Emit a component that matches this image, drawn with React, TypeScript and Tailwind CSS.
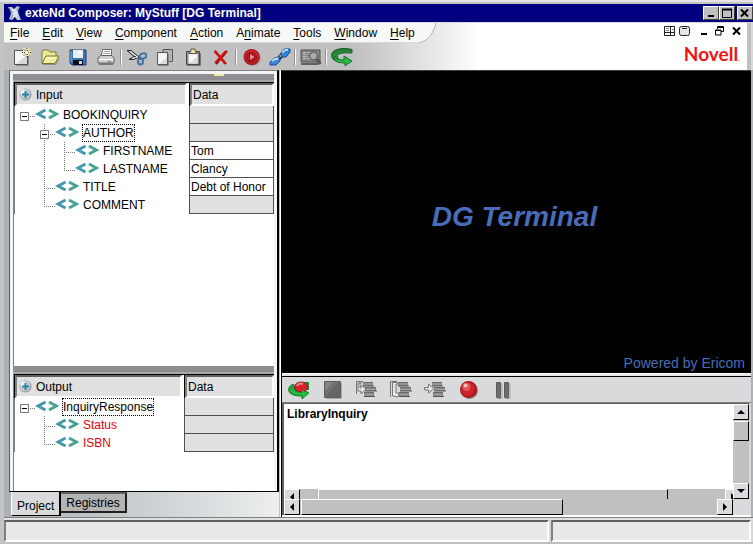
import React from 'react';

type Guide = 'blank' | 'line' | 'tee' | 'corner' | 'root' | 'branch';

interface TreeRow {
  name: string;
  guides: Guide[];
  value?: string;
  selected?: boolean;
  required?: boolean;
}

const inputRows: TreeRow[] = [
  { name: 'BOOKINQUIRY', guides: ['root'] },
  { name: 'AUTHOR', guides: ['blank', 'branch'], selected: true },
  { name: 'FIRSTNAME', guides: ['blank', 'line', 'tee'], value: 'Tom' },
  { name: 'LASTNAME', guides: ['blank', 'line', 'corner'], value: 'Clancy' },
  { name: 'TITLE', guides: ['blank', 'tee'], value: 'Debt of Honor' },
  { name: 'COMMENT', guides: ['blank', 'corner'] },
];

const outputRows: TreeRow[] = [
  { name: 'InquiryResponse', guides: ['root'], selected: true },
  { name: 'Status', guides: ['blank', 'tee'], required: true },
  { name: 'ISBN', guides: ['blank', 'corner'], required: true },
];

const menus: [string, string, string][] = [
  ['', 'F', 'ile'],
  ['', 'E', 'dit'],
  ['', 'V', 'iew'],
  ['', 'C', 'omponent'],
  ['', 'A', 'ction'],
  ['A', 'n', 'imate'],
  ['', 'T', 'ools'],
  ['', 'W', 'indow'],
  ['', 'H', 'elp'],
];

const Svg: React.FC<{ w: number; h: number; children: React.ReactNode }> = ({ w, h, children }) => (
  <svg width={w} height={h} viewBox={`0 0 ${w} ${h}`} fill="none" aria-hidden="true" className="shrink-0">
    {children}
  </svg>
);

const NewIcon = () => (
  <Svg w={18} h={18}>
    <path d="M3 17.500h12.500V8" stroke="#8c8c8c" />
    <path d="M1.500 2.500h13v14h-13z" fill="#f6f6f6" stroke="#555" />
    <path d="M3 16L14 7v9z" fill="#d8d8d8" />
    <path d="M10 0h8v8h-8z" fill="#e8e6b8" />
    <path d="M14 0v9M9 4.500h9M10.500 1l7 7M17.500 1l-7 7" stroke="#333" strokeDasharray="1 1" />
    <path d="M12.500 3h3v3h-3z" fill="#fffad0" />
  </Svg>
);

const OpenIcon = () => (
  <Svg w={20} h={18}>
    <path d="M2 15V4l1-2h5l2 2h6v4" fill="#efe99a" stroke="#7d7a28" />
    <path d="M2 15.500L6 8h13l-4 7.500z" fill="#f2ec9c" stroke="#77742a" />
    <path d="M5 14l2-4h9" stroke="#fffde0" />
    <path d="M3 16.500h13l3-6" stroke="#8c8c8c" />
  </Svg>
);

const SaveIcon = () => (
  <Svg w={18} h={18}>
    <path d="M1 2h16v15H3l-2-2z" fill="#3f74b5" stroke="#1f3f73" />
    <path d="M4 2h10v8H4z" fill="#e6edf3" />
    <path d="M10 3h3v3h-3z" fill="#fff" />
    <path d="M4 12h10v5H4z" fill="#0c0c14" />
    <path d="M10 13h3v3h-3z" fill="#c9d6e4" />
    <path d="M2 3v11" stroke="#7faadb" />
  </Svg>
);

const PrintIcon = () => (
  <Svg w={18} h={18}>
    <path d="M4 9L5.500 1.500h9V9" fill="#fff" stroke="#666" />
    <path d="M7 3.500h6M6 5.500h7" stroke="#aaa" />
    <path d="M1 10l3-2.500h11l2 2.500v5H1z" fill="#d0d0d0" stroke="#666" />
    <path d="M2 11.500h14" stroke="#fff" />
    <path d="M2 16h14" stroke="#777" strokeWidth="2" />
    <path d="M11 13.500h3" stroke="#4b88b8" />
  </Svg>
);

const CutIcon = () => (
  <Svg w={20} h={18}>
    <path d="M0 2.500h4l8 6.500M2 11.500h4l7-2.500M0 2.500L9 10M2 11.500l5-3 6 0" stroke="#222" />
    <path d="M3 3.500l8 6M5 10.500l6-2" stroke="#eee" />
    <ellipse cx="16" cy="8" rx="3.500" ry="2.500" transform="rotate(-20 16 8)" stroke="#456f9f" strokeWidth="2" />
    <ellipse cx="13.500" cy="13.500" rx="2.500" ry="3" stroke="#456f9f" strokeWidth="2" />
  </Svg>
);

const CopyIcon = () => (
  <Svg w={18} h={18}>
    <path d="M7 1.500h9.500v12H7z" fill="#b4b4b4" stroke="#555" />
    <path d="M1.500 4.500h10v12h-10z" fill="#f5f5f5" stroke="#555" />
    <path d="M3 16l8-7v7z" fill="#dcdcdc" />
    <path d="M2 17.500h10.500V6" stroke="#888" />
  </Svg>
);

const PasteIcon = () => (
  <Svg w={16} h={18}>
    <path d="M1.500 3.500h13v13h-13z" fill="#8c8c8c" stroke="#444" />
    <path d="M3.500 6h9v9.500h-9z" fill="#f5f5f5" />
    <path d="M4 15.500l8.500-7v7z" fill="#dcdcdc" />
    <path d="M4 5.500L6 3V1h4v2l2 2.500z" fill="#efe88c" stroke="#555" />
    <path d="M2 17.500h13.500V5" stroke="#777" />
  </Svg>
);

const DeleteIcon = () => (
  <Svg w={16} h={18}>
    <path d="M2 3l11 13M14 3L3 16" stroke="#7a1010" strokeWidth="2" />
    <path d="M1.500 3L12 15.500M13 3L2 15" stroke="#e01010" strokeWidth="2" />
  </Svg>
);

const RunIcon = () => (
  <Svg w={18} h={18}>
    <circle cx="9.500" cy="9.500" r="8" fill="#8a7a7a" />
    <circle cx="8.500" cy="9" r="8" fill="#b01a22" />
    <circle cx="8.500" cy="8.500" r="6.500" fill="#d8262e" />
    <circle cx="8.500" cy="9" r="5" fill="#c01c24" stroke="#8c1218" />
    <path d="M6.500 5v8l6-4z" fill="#ee8a8c" stroke="#7c1018" />
  </Svg>
);

const LinkIcon = () => (
  <Svg w={22} h={18}>
    <path d="M8 12l6-6" stroke="#111" strokeWidth="4" />
    <path d="M8.500 10.500l5-4" stroke="#fff" strokeWidth="2" strokeDasharray="2 1" />
    <path d="M12 5l3-4h6v3l-4 5h-5z" fill="#2f86d8" stroke="#12508f" />
    <path d="M13 4.500l3-2.500h3" stroke="#a8d6ff" strokeWidth="2" />
    <path d="M1 14l4-4h6v3l-4 4H1z" fill="#3c86de" stroke="#1c4e9c" />
    <path d="M3 13l3-2h3" stroke="#b4dcff" strokeWidth="2" />
  </Svg>
);

const InspectIcon = () => (
  <Svg w={22} h={18}>
    <path d="M1 2h19v12H1z" fill="#858585" stroke="#4e4e4e" />
    <path d="M3 4.500h7M3 6.500h5M3 8.500h5M3 10.500h7" stroke="#c2c2c2" strokeDasharray="3 1" />
    <path d="M1 16h17" stroke="#5e5e5e" strokeWidth="2" />
    <circle cx="13.500" cy="8" r="4" fill="#a9a9a9" stroke="#555" />
    <path d="M16.500 11l4 5" stroke="#555" strokeWidth="3" />
  </Svg>
);

const ReturnIcon = () => (
  <Svg w={22} h={18}>
    <path d="M21 1.500C12-1 1 1 .5 7c0 4 3 6 7 7v-3.500c-1-1-1-2-1-3C7 5 14 4.500 21 5z" fill="#2b8a3b" stroke="#17602a" />
    <path d="M3 8c2 3 5 4 10 4V8l8 5-7 5v-3C8 15 3 14 3 8z" fill="#2bb848" stroke="#17702a" />
    <path d="M2 5c3-3 10-4 18-2" stroke="#1a5c28" strokeDasharray="1 1" />
  </Svg>
);

const ReplayIcon = () => (
  <Svg w={22} h={18}>
    <path d="M15 1h6v8h-4z" fill="#1f8a35" />
    <path d="M5 3C-1 6-1 12 6 14c3 1 6 1 8 1v3l7-6-7-4v3c-5 0-8-1-7-4z" fill="#1fa83c" stroke="#167a2c" />
    <ellipse cx="13" cy="6" rx="6.500" ry="5" fill="#cf252b" stroke="#8e1a1e" />
    <path d="M9 5c1-2 3-3 6-2" stroke="#f08080" strokeWidth="2" />
    <path d="M3 9c2 3 7 4 12 4v-2l4 2-4 3" stroke="#24c044" strokeWidth="2" />
  </Svg>
);

const StopIcon = () => (
  <Svg w={18} h={18}>
    <path d="M2 17.500h15.500V2" stroke="#aaa" />
    <path d="M.5.5h16v16H.5z" fill="#707070" stroke="#5c5c5c" />
    <path d="M1 16L16 1v15z" fill="#646464" />
    <path d="M1 1h9l-9 9z" fill="#848484" />
  </Svg>
);

const Bars: React.FC<{ x: number }> = ({ x }) => (
  <g transform={`translate(${x} 0)`}>
    <path d="M0 1h10v4H0zM2 6h11v4H2zM1 11h10v4H1z" fill="#8a8a8a" />
    <path d="M0 1.500h10M2 6.500h11M1 11.500h10" stroke="#6c6c6c" />
    <path d="M0 5h11M2 10h12M1 15.500h11" stroke="#555" />
    <path d="M1 3h8M3 8.500h9M2 13.500h8" stroke="#a0a0a0" />
  </g>
);

const StepIntoIcon = () => (
  <Svg w={22} h={18}>
    <Bars x={7} />
    <path d="M7 .5H.5V13" stroke="#777" />
    <path d="M6 2H2v8h3v3l5-5-5-4v3H4V2" fill="#e6e6e6" stroke="#777" />
  </Svg>
);

const StepOverIcon = () => (
  <Svg w={22} h={18}>
    <Bars x={8} />
    <path d="M7 .5H.5V16" stroke="#777" />
    <path d="M7 1.500H2.500V15L8 16l1-4H6V3h2z" fill="#e6e6e6" stroke="#777" />
  </Svg>
);

const StepOutIcon = () => (
  <Svg w={22} h={18}>
    <Bars x={8} />
    <path d="M.5 6.500h4V3l5.500 4.500-5.500 4.500V9h-4z" fill="#e6e6e6" stroke="#777" />
  </Svg>
);

const RecordIcon = () => (
  <Svg w={20} h={18}>
    <circle cx="10.500" cy="9.500" r="8.500" fill="#8a8080" />
    <circle cx="9.500" cy="8.500" r="8.500" fill="#a8161c" />
    <circle cx="9" cy="8" r="7" fill="#cc2229" />
    <circle cx="7.500" cy="6" r="4" fill="#e2555a" />
    <circle cx="6.500" cy="4.500" r="2" fill="#f6b8b8" />
  </Svg>
);

const PauseIcon = () => (
  <Svg w={16} h={18}>
    <path d="M2 17.500h5V2M10 17.500h5V2" stroke="#a6a6a6" />
    <path d="M1.500 1.500h4v15h-4zM9.500 1.500h4v15h-4z" fill="#6e6e6e" stroke="#5c5c5c" />
  </Svg>
);

const mainTools: ([string, React.FC] | null)[] = [
  ['New', NewIcon],
  ['Open', OpenIcon],
  ['Save', SaveIcon],
  ['Print', PrintIcon],
  null,
  ['Cut', CutIcon],
  ['Copy', CopyIcon],
  ['Paste', PasteIcon],
  ['Delete', DeleteIcon],
  null,
  ['Run', RunIcon],
  ['Connect', LinkIcon],
  null,
  ['Inspect', InspectIcon],
  null,
  ['Return', ReturnIcon],
];

const animateTools: [string, React.FC][] = [
  ['Start animation', ReplayIcon],
  ['Stop', StopIcon],
  ['Step into', StepIntoIcon],
  ['Step over', StepOverIcon],
  ['Step out', StepOutIcon],
  ['Record', RecordIcon],
  ['Pause', PauseIcon],
];

const GuideSlot: React.FC<{ kind: Guide }> = ({ kind }) => {
  const box = kind === 'root' || kind === 'branch';
  return (
    <Svg w={20} h={18}>
      <g stroke="#777" strokeDasharray="1 1">
        {(kind === 'line' || kind === 'tee' || kind === 'branch') && <path d="M9.500 0v18" />}
        {kind === 'corner' && <path d="M9.500 0v10" />}
        {kind !== 'blank' && kind !== 'line' && <path d="M9 10.500h12" />}
      </g>
      {box && (
        <>
          <path d="M5.500 6.500h8v8h-8z" fill="#fff" stroke="#777" />
          <path d="M7 10.500h5" stroke="#000" />
        </>
      )}
    </Svg>
  );
};

const TagIcon = () => (
  <Svg w={24} h={18}>
    <path d="M10.500 4L3 8l7.500 4" stroke="#4597ae" strokeWidth="3" />
    <path d="M14 4l7.500 4-7.500 4" stroke="#48a294" strokeWidth="3" />
  </Svg>
);

const PlusBall = () => (
  <Svg w={13} h={13}>
    <circle cx="6.500" cy="6.500" r="6" fill="#8f969a" />
    <circle cx="6" cy="6" r="5.500" fill="#c3cace" />
    <circle cx="4.500" cy="4.500" r="3" fill="#eef1f3" />
    <path d="M6.500 3v7M3 6.500h7" stroke="#2f7fa6" strokeWidth="2" />
  </Svg>
);

const bevelIn = 'border-2 border-t-[#606060] border-l-[#808080] border-r-white border-b-white';
const bevelOut = 'border border-t-white border-l-white border-r-black border-b-black';

const TreeTable: React.FC<{ title: string; rows: TreeRow[]; dataWidth: string }> = ({ title, rows, dataWidth }) => (
  <table className="w-full table-fixed border-separate border-spacing-0 text-left">
    <thead>
      <tr>
        <th className="h-6 border-t border-l border-black bg-white p-0 font-normal">
          <div className={`mr-0.5 flex h-[23px] items-center gap-1 bg-[#e0e0e0] pl-0.5 ${bevelIn}`}>
            <PlusBall />
            {title}
          </div>
        </th>
        <th className={`h-6 border-t border-l border-black p-0 font-normal ${dataWidth}`}>
          <div className={`flex h-[23px] items-center bg-[#e0e0e0] pl-px ${bevelIn}`}>Data</div>
        </th>
      </tr>
    </thead>
    <tbody>
      {rows.map((row) => (
        <tr key={row.name}>
          <td className="h-[18px] border-l border-[#808080] p-0">
            <div className="flex h-[18px] items-center">
              {row.guides.map((kind, i) => (
                <GuideSlot key={i} kind={kind} />
              ))}
              <TagIcon />
              <span
                className={`ml-[3px] border border-dotted leading-4 ${row.selected ? 'border-black' : 'border-transparent'} ${row.required ? 'text-[#f00000]' : ''}`}
              >
                {row.name}
              </span>
            </div>
          </td>
          <td
            className={`h-[18px] border-b border-l border-r border-[#505050] p-0 pl-px leading-4 whitespace-nowrap ${row.value ? 'bg-white' : 'bg-[#e0e0e0]'}`}
          >
            {row.value}
          </td>
        </tr>
      ))}
    </tbody>
  </table>
);

const Splitter: React.FC<{ marked?: boolean }> = ({ marked }) => (
  <div className="h-2 shrink-0 border-b-2 border-[#a8a8a8] bg-[#8e8e92]">
    <div className={`ml-auto h-0.5 w-2.5 ${marked ? 'mr-[50px] bg-[#efe6a0]' : ''}`} />
  </div>
);

const Arrow: React.FC<{ dir: 'up' | 'down' | 'left' | 'right' }> = ({ dir }) => {
  const paths = { up: 'M0 6h8L4 2z', down: 'M0 2h8L4 6z', left: 'M6 0v8L2 4z', right: 'M2 0v8l4-4z' };
  return (
    <Svg w={8} h={8}>
      <path d={paths[dir]} fill="#000" />
    </Svg>
  );
};

const ScrollButton: React.FC<{ dir: 'up' | 'down' | 'left' | 'right' }> = ({ dir }) => (
  <button aria-label={`Scroll ${dir}`} className={`flex h-4 w-4 shrink-0 items-center justify-center bg-[#d8dadc] ${bevelOut}`}>
    <Arrow dir={dir} />
  </button>
);

const WindowButton: React.FC<{ label: string; children: React.ReactNode }> = ({ label, children }) => (
  <button
    aria-label={label}
    className="flex h-3.5 w-4 items-center justify-center border border-t-white border-l-white border-r-[#404040] border-b-[#404040] bg-[#c0c0c0]"
  >
    {children}
  </button>
);

const TitleBar = () => (
  <div className="flex h-[18px] shrink-0 items-center bg-[#000080] pl-1 font-bold text-white">
    <Svg w={13} h={16}>
      <path d="M0 2h4l2 2 3-3 3 1-2 4 1 4 2 5H9l-2-3-3 3-3-1 2-5-1-4z" fill="#b7c9d4" />
      <path d="M3 4h7l-1 3 1 5H4l1-5z" fill="#d9e4ea" />
      <path d="M1 3l3 5M11 2L9 6M3 13l2-3" stroke="#5d7f93" />
    </Svg>
    <h1 className="ml-1 flex-1 leading-4">exteNd Composer: MyStuff [DG Terminal]</h1>
    <WindowButton label="Minimize">
      <Svg w={10} h={10}>
        <path d="M2 8h6" stroke="#000" strokeWidth="2" />
      </Svg>
    </WindowButton>
    <WindowButton label="Maximize">
      <Svg w={10} h={10}>
        <path d="M.5 1.500h9v8h-9z" stroke="#000" />
        <path d="M0 1.500h10" stroke="#000" strokeWidth="2" />
      </Svg>
    </WindowButton>
    <div className="ml-0.5 flex">
      <WindowButton label="Close">
        <Svg w={10} h={10}>
          <path d="M1 1.500l7 7M8 1.500l-7 7" stroke="#000" strokeWidth="2" />
        </Svg>
      </WindowButton>
    </div>
  </div>
);

const Header = () => (
  <header className="mt-px mr-[2px] flex h-[47px] shrink-0 border-r-4 border-[#c0c0c0] bg-linear-to-r from-[#c0c0c0] from-[350px] to-white to-[475px]">
    <div className="flex flex-1 flex-col">
      <div className="flex h-5">
        <nav className="flex items-center gap-[13px] border-b border-[#d8d8d8] bg-[#f6f9f8] pr-1 pl-1.5">
          {menus.map(([before, key, after]) => (
            <button key={key + after} className="leading-4">
              {before}
              <span className="underline underline-offset-2">{key}</span>
              {after}
            </button>
          ))}
        </nav>
        <Svg w={18} h={20}>
          <path d="M0 0h17C14 10 10 18 0 19.500z" fill="#f6f9f8" />
          <path d="M17 0C14 10 10 18 0 19.500" stroke="#b4b4b4" />
        </Svg>
      </div>
      <div className="flex flex-1 items-center pl-1" role="toolbar" aria-label="Main">
        {mainTools.map((tool, i) => {
          if (!tool) return <div key={i} className="mr-px h-4 w-0.5 border-l border-[#909090] bg-white" />;
          const [label, Icon] = tool;
          return (
            <button key={i} aria-label={label} className="flex h-6 w-7 items-center justify-center">
              <Icon />
            </button>
          );
        })}
      </div>
    </div>
    <div className="flex flex-col items-end pr-1.5">
      <div className="mt-0.5 flex h-4 items-center">
        <button aria-label="Tile windows">
          <Svg w={12} h={11}>
            <path d="M.5.5h10v9H.5zM6.500 0v10M0 6.500h11" fill="#fff" stroke="#222" />
            <path d="M2 2.500h3M2 4.500h3M8 3.500h2" stroke="#888" />
          </Svg>
        </button>
        <button aria-label="Show window" className="ml-[3px]">
          <Svg w={12} h={11}>
            <rect x=".5" y=".5" width="10" height="9" rx="2" fill="#e6e6ea" stroke="#222" />
            <path d="M3 2.500h5" stroke="#222" />
          </Svg>
        </button>
        <button aria-label="Minimize document" className="ml-2.5">
          <Svg w={6} h={10}>
            <path d="M0 8h6" stroke="#000" strokeWidth="2" />
          </Svg>
        </button>
        <button aria-label="Restore document" className="ml-2">
          <Svg w={9} h={10}>
            <path d="M2.500 3V.5h6v5H6M2 1.500h7" stroke="#000" />
            <path d="M.5 4h5.500v5H.5zM0 4.500h6" stroke="#000" />
          </Svg>
        </button>
        <button aria-label="Close document" className="ml-2">
          <Svg w={9} h={10}>
            <path d="M1 1.500l7 7M8 1.500l-7 7" stroke="#000" strokeWidth="2" />
          </Svg>
        </button>
      </div>
      <div className="mt-[5px] pr-px text-[19px] leading-6 font-bold text-[#f01414] [font-family:Lato,sans-serif]">
        Novell<span className="text-[8px] font-normal">.</span>
      </div>
    </div>
  </header>
);

const ProjectPane = () => (
  <aside className="flex w-[275px] shrink-0 flex-col bg-linear-to-r from-[#a9b1b4] to-[#eceeef]">
    <div className="ml-[5px] flex min-h-0 flex-1 flex-col border-t border-r-2 border-b border-l border-t-[#808080] border-r-black border-b-black border-l-[#606060]">
      <div className="flex min-h-0 flex-1 flex-col border-3 border-b-0 border-[#f4f4f4]">
        <Splitter marked />
        <div className="min-h-0 flex-1 overflow-hidden border-l border-[#808080] bg-white">
          <TreeTable title="Input" rows={inputRows} dataWidth="w-[85px]" />
        </div>
        <Splitter />
        <div className="h-[117px] shrink-0 overflow-hidden border-l border-[#808080] bg-white">
          <TreeTable title="Output" rows={outputRows} dataWidth="w-[90px]" />
        </div>
      </div>
    </div>
    <div className="flex h-[25px] shrink-0 items-start pl-[7px]" role="tablist">
      <button
        role="tab"
        aria-selected="true"
        className="h-6 border-r-2 border-b border-l border-r-black border-b-black border-l-white bg-[#d8dadc] px-[5px] pt-1"
      >
        Project
      </button>
      <button
        role="tab"
        aria-selected="false"
        className="h-[21px] border-t-2 border-r-2 border-b-2 border-t-[#606060] border-r-[#202020] border-b-[#202020] bg-[#b4b4b4] px-[5px] leading-4"
      >
        Registries
      </button>
    </div>
  </aside>
);

const Terminal = () => (
  <section className="flex min-h-0 flex-1 flex-col border-t border-[#404040] bg-black text-[#4a6cb8]">
    <div className="flex flex-1 items-center justify-center pt-2.5 pr-1 text-[28px] font-bold italic">DG Terminal</div>
    <div className="pr-1.5 text-right text-[14px] leading-5">Powered by Ericom</div>
  </section>
);

const ActionPane = () => (
  <section className="shrink-0 bg-[#d8dadc]">
    <div className="flex h-[27px] items-center border-t border-b border-t-black border-b-[#808080]" role="toolbar" aria-label="Animate">
      {animateTools.map(([label, Icon]) => (
        <button key={label} aria-label={label} className="flex h-6 w-[34px] items-center justify-center">
          <Icon />
        </button>
      ))}
    </div>
    <div className="mr-0.5 border-t border-l-2 border-[#606060] bg-white">
      <div className="flex">
        <div className="flex min-w-0 flex-1 flex-col">
          <div className="h-[85px] bg-white pl-[3px] leading-5 font-bold">LibraryInquiry</div>
          <div className="flex h-2.5 items-start overflow-hidden bg-[#c0c0c0]">
            <ScrollButton dir="left" />
            <div className={`ml-[18px] h-4 w-[350px] bg-[#c0c0c0] ${bevelOut}`} />
            <div className="flex-1" />
            <div className="-mr-2">
              <ScrollButton dir="right" />
            </div>
          </div>
        </div>
        <div className="flex w-4 flex-col bg-[#c0c0c0]">
          <ScrollButton dir="up" />
          <div className={`mt-px h-5 bg-[#c0c0c0] ${bevelOut}`} />
          <div className="flex-1" />
          <ScrollButton dir="down" />
        </div>
      </div>
      <div className="flex h-4 bg-[#c0c0c0]">
        <ScrollButton dir="left" />
        <div className={`ml-px w-[262px] ${bevelOut}`} />
        <div className="flex-1" />
        <ScrollButton dir="right" />
        <div className="w-4 bg-[#d8dadc]" />
      </div>
    </div>
  </section>
);

export default function App() {
  return (
    <div className="flex h-screen flex-col border-t-2 border-[#e4e4e4] bg-[#d8d8d8] [font-family:'Liberation_Sans',Arial,sans-serif] text-xs text-black">
      <div className="flex min-h-0 flex-1 flex-col border-t-2 border-l-4 border-[#c4c4c4]">
        <TitleBar />
        <Header />
        <main className="flex min-h-0 flex-1 border-b border-[#808080]">
          <ProjectPane />
          <div className="flex w-[3px] shrink-0 border-r border-l border-r-black border-l-[#c0c0c0] bg-white" />
          <div className="flex min-w-0 flex-1 flex-col">
            <Terminal />
            <div className="h-[3px] shrink-0 border-t border-white bg-[#e8e4e8]" />
            <ActionPane />
            <div className="h-0.5 shrink-0 bg-white" />
          </div>
          <div className="w-0.5 shrink-0 bg-[#aab2b6]" />
        </main>
        <footer className="flex h-[26px] shrink-0 gap-0.5 border-t-2 border-b-2 border-t-[#e0e0e0] border-b-[#c0c0c0] pr-0.5">
          <div className={`flex-1 bg-[#e9e9e7] ${bevelIn}`} />
          <div className={`w-[200px] bg-[#e9e9e7] ${bevelIn}`} />
        </footer>
      </div>
    </div>
  );
}
